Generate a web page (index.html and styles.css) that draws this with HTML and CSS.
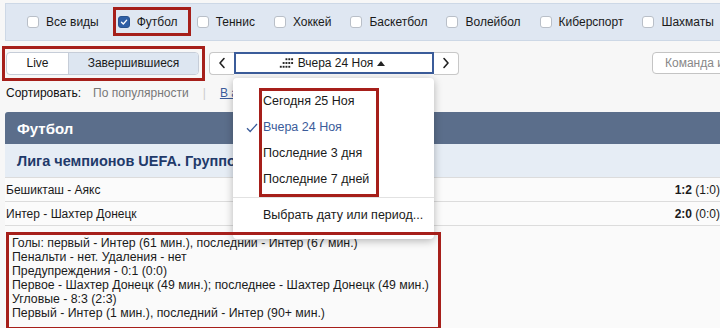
FILE: index.html
```html
<!DOCTYPE html>
<html lang="ru">
<head>
<meta charset="utf-8">
<title>Результаты</title>
<link rel="stylesheet" href="styles.css">
</head>
<body>
<div class="page">
  <div class="sports">
    <label class="sport"><span class="cb"></span>Все виды</label>
    <label class="sport"><span class="cb on"><svg viewBox="0 0 12 12" width="12" height="12"><path d="M3 6.2 L5.2 8.4 L9.2 3.8" fill="none" stroke="#fff" stroke-width="1.6" stroke-linecap="round" stroke-linejoin="round"/></svg></span>Футбол</label>
    <label class="sport"><span class="cb"></span>Теннис</label>
    <label class="sport"><span class="cb"></span>Хоккей</label>
    <label class="sport"><span class="cb"></span>Баскетбол</label>
    <label class="sport"><span class="cb"></span>Волейбол</label>
    <label class="sport"><span class="cb"></span>Киберспорт</label>
    <label class="sport"><span class="cb"></span>Шахматы</label>
  </div>

  <div class="toolbar">
    <div class="seg">
      <span class="seg-item live">Live</span>
      <span class="seg-item active">Завершившиеся</span>
    </div>
    <div class="datenav">
      <span class="arrow left"><svg viewBox="0 0 8 12" width="8" height="12"><path d="M6 1.5 L2 6 L6 10.5" fill="none" stroke="#222" stroke-width="1.6" stroke-linecap="round" stroke-linejoin="round"/></svg></span>
      <span class="date">
        <svg class="grid" viewBox="0 0 18 10" width="17" height="10">
          <g fill="#222">
            <rect x="9" y="0" width="2" height="2"/><rect x="12" y="0" width="2" height="2"/><rect x="15" y="0" width="2" height="2"/>
            <rect x="6" y="4" width="2" height="2"/><rect x="9" y="4" width="2" height="2"/><rect x="12" y="4" width="2" height="2"/><rect x="15" y="4" width="2" height="2"/>
            <rect x="3" y="8" width="2" height="2"/><rect x="6" y="8" width="2" height="2"/><rect x="9" y="8" width="2" height="2"/><rect x="12" y="8" width="2" height="2"/>
          </g>
        </svg>
        <span>Вчера 24 Ноя</span><span class="tri"></span>
      </span>
      <span class="arrow right"><svg viewBox="0 0 8 12" width="8" height="12"><path d="M2 1.5 L6 6 L2 10.5" fill="none" stroke="#222" stroke-width="1.6" stroke-linecap="round" stroke-linejoin="round"/></svg></span>
    </div>
    <div class="search">Команда или турнир</div>
  </div>

  <div class="sort">
    <span class="sort-label">Сортировать:</span>
    <span class="sort-opt">По популярности</span>
    <span class="sort-sep">|</span>
    <span class="sort-link">В алфавитном порядке</span>
  </div>

  <div class="section">
    <div class="sec-head">Футбол</div>
    <div class="league">Лига чемпионов UEFA. Групповой этап. Группа B</div>
    <div class="match"><span>Бешикташ - Аякс</span><span class="score"><b>1:2</b> (1:0)</span></div>
    <div class="match"><span>Интер - Шахтер Донецк</span><span class="score"><b>2:0</b> (0:0)</span></div>
    <div class="details">
      <div>Голы: первый - Интер (61 мин.), последний - Интер (67 мин.)</div>
      <div>Пенальти - нет. Удаления - нет</div>
      <div>Предупреждения - 0:1 (0:0)</div>
      <div>Первое - Шахтер Донецк (49 мин.); последнее - Шахтер Донецк (49 мин.)</div>
      <div>Угловые - 8:3 (2:3)</div>
      <div>Первый - Интер (1 мин.), последний - Интер (90+ мин.)</div>
    </div>
  </div>

  <div class="dropdown">
    <div class="dd-item">Сегодня 25 Ноя</div>
    <div class="dd-item current"><svg class="check" viewBox="0 0 12 10" width="12" height="10"><path d="M1 5.2 L4.2 8.5 L11 1" fill="none" stroke="#3b5c9a" stroke-width="1.3"/></svg>Вчера 24 Ноя</div>
    <div class="dd-item">Последние 3 дня</div>
    <div class="dd-item">Последние 7 дней</div>
    <div class="dd-sep"></div>
    <div class="dd-item">Выбрать дату или период...</div>
  </div>

  <div class="mark mark-sport"></div>
  <div class="mark mark-seg"></div>
  <div class="mark mark-dd"></div>
  <div class="mark mark-details"></div>
</div>
</body>
</html>
```

FILE: styles.css
```css
* { box-sizing: border-box; }
html, body { margin: 0; padding: 0; }
body {
  background: #f7f7f7;
  font-family: "Liberation Sans", Arial, sans-serif;
  color: #1a1a1a;
  font-size: 12px;
}
.page {
  position: relative;
  width: 720px;
  height: 328px;
  overflow: hidden;
}

/* sports filter bar */
.sports {
  margin: 3px 0 0 5px;
  height: 38px;
  width: 760px;
  background: #dfe7f2;
  border: 1px solid #cdd8e6;
  display: flex;
  align-items: center;
  padding-left: 21px;
  gap: 19px;
  white-space: nowrap;
}
.sport {
  display: flex;
  align-items: center;
  gap: 7px;
  font-size: 12px;
  color: #1a1a1a;
  flex-shrink: 0;
}
.cb {
  width: 12px;
  height: 12px;
  flex-shrink: 0;
  border: 1px solid #b9bfc8;
  border-radius: 3px;
  background: #fff;
  display: inline-flex;
  align-items: center;
  justify-content: center;
}
.cb.on {
  background: #2f5fa6;
  border-color: #2a548f;
}
.cb svg { display: block; }

/* toolbar */
.toolbar {
  display: flex;
  align-items: center;
  height: 24px;
  margin-top: 10px;
  padding-left: 6px;
  white-space: nowrap;
  width: 900px;
}
.seg {
  display: flex;
  flex-shrink: 0;
  width: 193px;
  height: 23px;
  border: 1px solid #c6cdd8;
  border-radius: 4px;
  overflow: hidden;
  background: #fff;
}
.seg-item {
  display: flex;
  align-items: center;
  justify-content: center;
  font-size: 12px;
}
.seg-item.live {
  width: 61px;
  flex-shrink: 0;
}
.seg-item.active {
  flex: 1;
  background: #dde6f1;
  border-left: 1px solid #c6cdd8;
}
.datenav {
  display: flex;
  flex-shrink: 0;
  align-items: center;
  margin-left: 10px;
  height: 23px;
}
.arrow {
  width: 25px;
  height: 23px;
  flex-shrink: 0;
  border: 1px solid #c8c8c8;
  background: #fff;
  display: flex;
  align-items: center;
  justify-content: center;
}
.arrow.left { border-radius: 4px 0 0 4px; border-right: none; }
.arrow.right { border-radius: 0 4px 4px 0; border-left: none; }
.date {
  width: 200px;
  height: 22px;
  flex-shrink: 0;
  border: 2px solid #3b5c9a;
  background: #fff;
  display: flex;
  align-items: center;
  justify-content: center;
  font-size: 12px;
  gap: 4px;
  padding-right: 6px;
}
.grid { display: block; }
.tri {
  display: inline-block;
  width: 0;
  height: 0;
  border-left: 4px solid transparent;
  border-right: 4px solid transparent;
  border-bottom: 5px solid #222;
}
.search {
  margin-left: 193px;
  width: 160px;
  height: 22px;
  flex-shrink: 0;
  border: 1px solid #c4c4c4;
  border-radius: 4px;
  background: #fff;
  color: #888;
  font-size: 12px;
  display: flex;
  align-items: center;
  padding-left: 12px;
}

/* sort row */
.sort {
  margin-top: 8px;
  height: 20px;
  line-height: 20px;
  padding-left: 6px;
  display: flex;
  gap: 12px;
  font-size: 12px;
  white-space: nowrap;
}
.sort-label { color: #111; }
.sort-opt { color: #777; }
.sort-sep { color: #ccc; margin: 0 2px; }
.sort-link { color: #3b5c9a; text-decoration: underline; }

/* section */
.section {
  margin: 9px 0 0 5px;
  background: #fafafa;
}
.sec-head {
  height: 32px;
  background: #5b6e8b;
  color: #fff;
  font-weight: bold;
  font-size: 15px;
  display: flex;
  align-items: center;
  padding-left: 12px;
  border-radius: 3px 0 0 0;
}
.league {
  height: 33px;
  background: #e6edf5;
  color: #1f3a6a;
  font-weight: bold;
  font-size: 14.5px;
  display: flex;
  align-items: center;
  padding-left: 12px;
  white-space: nowrap;
}
.match {
  height: 24px;
  border-top: 1px solid #dcdcdc;
  display: flex;
  align-items: center;
  justify-content: space-between;
  padding: 0 0 0 1px;
  font-size: 12px;
  background: #fbfbfb;
}
.score { color: #1a1a1a; }
.details {
  border-top: 1px solid #dcdcdc;
  padding: 10px 0 10px 7px;
  line-height: 14px;
  font-size: 12.3px;
  height: 104px;
  background: #fafafa;
  white-space: nowrap;
}

/* dropdown */
.dropdown {
  position: absolute;
  left: 233px;
  top: 78px;
  width: 201px;
  height: 161px;
  background: #fff;
  border-radius: 4px;
  box-shadow: 0 2px 8px rgba(0,0,0,0.28);
  padding-top: 10px;
  font-size: 12.5px;
}
.dd-item {
  position: relative;
  height: 26px;
  line-height: 26px;
  padding-left: 30px;
  color: #1a1a1a;
  white-space: nowrap;
}
.dd-item.current { color: #3b5c9a; }
.check {
  position: absolute;
  left: 13px;
  top: 9px;
}
.dd-sep {
  height: 1px;
  background: #e2e2e2;
  margin: 5px 0 4px;
}

/* annotation boxes */
.mark {
  position: absolute;
  border: 3px solid #a61f1a;
  pointer-events: none;
}
.mark-sport { left: 113px; top: 7px; width: 78px; height: 29px; }
.mark-seg { left: 2px; top: 46px; width: 203px; height: 35px; }
.mark-dd { left: 259px; top: 88px; width: 120px; height: 109px; }
.mark-details { left: 6px; top: 232px; width: 435px; height: 98px; }
```
